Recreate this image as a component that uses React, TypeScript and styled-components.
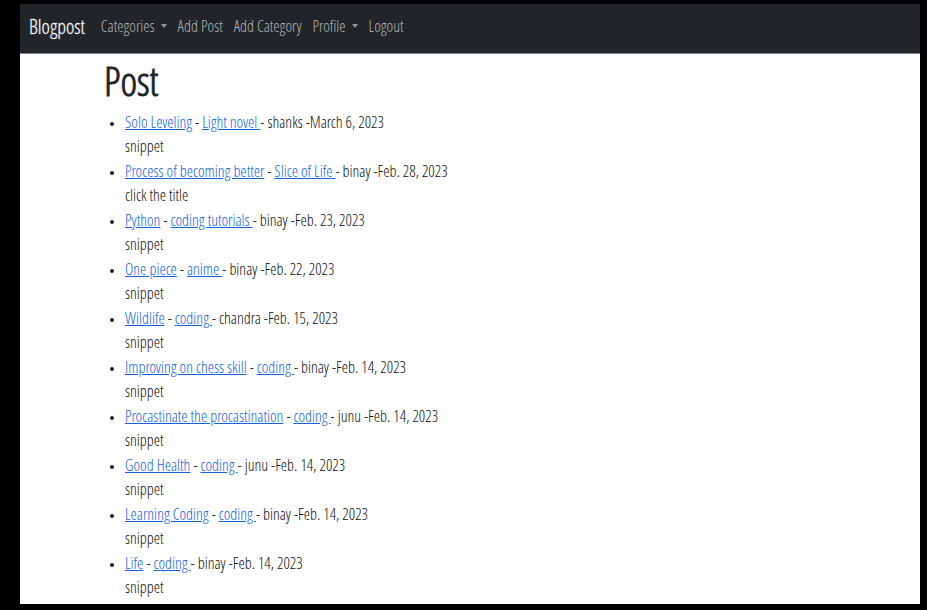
import React from "react";
import styled, { createGlobalStyle } from "styled-components";

const GlobalStyle = createGlobalStyle`
  * { box-sizing: border-box; }
  body {
    margin: 0;
    background: #000;
    color: #0c0e10;
    font-family: "Open Sans Condensed Light", "Open Sans", sans-serif;
    font-size: 16px;
    line-height: 24px;
  }
`;

const Frame = styled.div`
  display: flex;
  flex-direction: column;
  height: 100vh;
  padding: 4px 7px 6px 20px;
`;

const Navbar = styled.nav`
  display: flex;
  flex: none;
  align-items: flex-start;
  gap: 16px;
  height: 50px;
  padding: 9px 9px;
  background: #212529;
  border-bottom: 1px solid #85888a;
`;

const Brand = styled.a`
  color: #fff;
  font-size: 20px;
  line-height: 28px;
  text-decoration: none;
  -webkit-text-stroke: 1px #ffffff44;
`;

const Menu = styled.ul`
  display: flex;
  gap: 11px;
  margin: 0;
  padding: 0;
  list-style: none;
`;

const navItem = `
  display: flex;
  align-items: center;
  gap: 6px;
  padding: 0;
  border: 0;
  background: none;
  color: #b4b6b8;
  font: inherit;
  line-height: 26px;
  text-decoration: none;
  cursor: pointer;
`;

const NavLink = styled.a`${navItem}`;
const NavButton = styled.button`${navItem}`;

const Caret = styled.span`
  border: 3px solid transparent;
  border-top: 4px solid #929496;
  border-bottom: 0;
`;

const Page = styled.main`
  flex: 1;
  min-height: 0;
  overflow: hidden;
  padding: 0 84px;
  background: #fff;
`;

const Title = styled.h1`
  margin: 0 0 2px;
  color: #212529;
  font-size: 40px;
  font-weight: 400;
  line-height: 54px;
  -webkit-text-stroke: 1px #212529;
`;

const PostList = styled.ul`
  display: grid;
  gap: 1px;
  margin: 0;
  padding: 0 0 0 21px;
`;

const Post = styled.li`
  &::marker {
    color: #212529;
    font-size: 12px;
  }
`;

const PostLink = styled.a`
  color: #1263e0;
  text-decoration: underline;
  white-space: pre-wrap;
`;

type PostData = { title: string; category: string; author: string; date: string; snippet: string };

const posts: PostData[] = [
  { title: "Solo Leveling", category: "Light novel", author: "shanks", date: "March 6, 2023", snippet: "snippet" },
  { title: "Process of becoming better", category: "Slice of Life", author: "binay", date: "Feb. 28, 2023", snippet: "click the title" },
  { title: "Python", category: "coding tutorials", author: "binay", date: "Feb. 23, 2023", snippet: "snippet" },
  { title: "One piece", category: "anime", author: "binay", date: "Feb. 22, 2023", snippet: "snippet" },
  { title: "Wildlife", category: "coding", author: "chandra", date: "Feb. 15, 2023", snippet: "snippet" },
  { title: "Improving on chess skill", category: "coding", author: "binay", date: "Feb. 14, 2023", snippet: "snippet" },
  { title: "Procastinate the procastination", category: "coding", author: "junu", date: "Feb. 14, 2023", snippet: "snippet" },
  { title: "Good Health", category: "coding", author: "junu", date: "Feb. 14, 2023", snippet: "snippet" },
  { title: "Learning Coding", category: "coding", author: "binay", date: "Feb. 14, 2023", snippet: "snippet" },
  { title: "Life", category: "coding", author: "binay", date: "Feb. 14, 2023", snippet: "snippet" },
];

export default function App() {
  return (
    <Frame>
      <GlobalStyle />
      <Navbar>
        <Brand href="#">Blogpost</Brand>
        <Menu>
          <li><NavButton type="button">Categories<Caret /></NavButton></li>
          <li><NavLink href="#">Add Post</NavLink></li>
          <li><NavLink href="#">Add Category</NavLink></li>
          <li><NavButton type="button">Profile<Caret /></NavButton></li>
          <li><NavLink href="#">Logout</NavLink></li>
        </Menu>
      </Navbar>
      <Page>
        <Title>Post</Title>
        <PostList>
          {posts.map((post) => (
            <Post key={post.title}>
              <PostLink href="#">{post.title}</PostLink>
              {" - "}
              <PostLink href="#">{post.category + " "}</PostLink>
              {"- "}{post.author} -{post.date}
              <br />
              {post.snippet}
            </Post>
          ))}
        </PostList>
      </Page>
    </Frame>
  );
}
